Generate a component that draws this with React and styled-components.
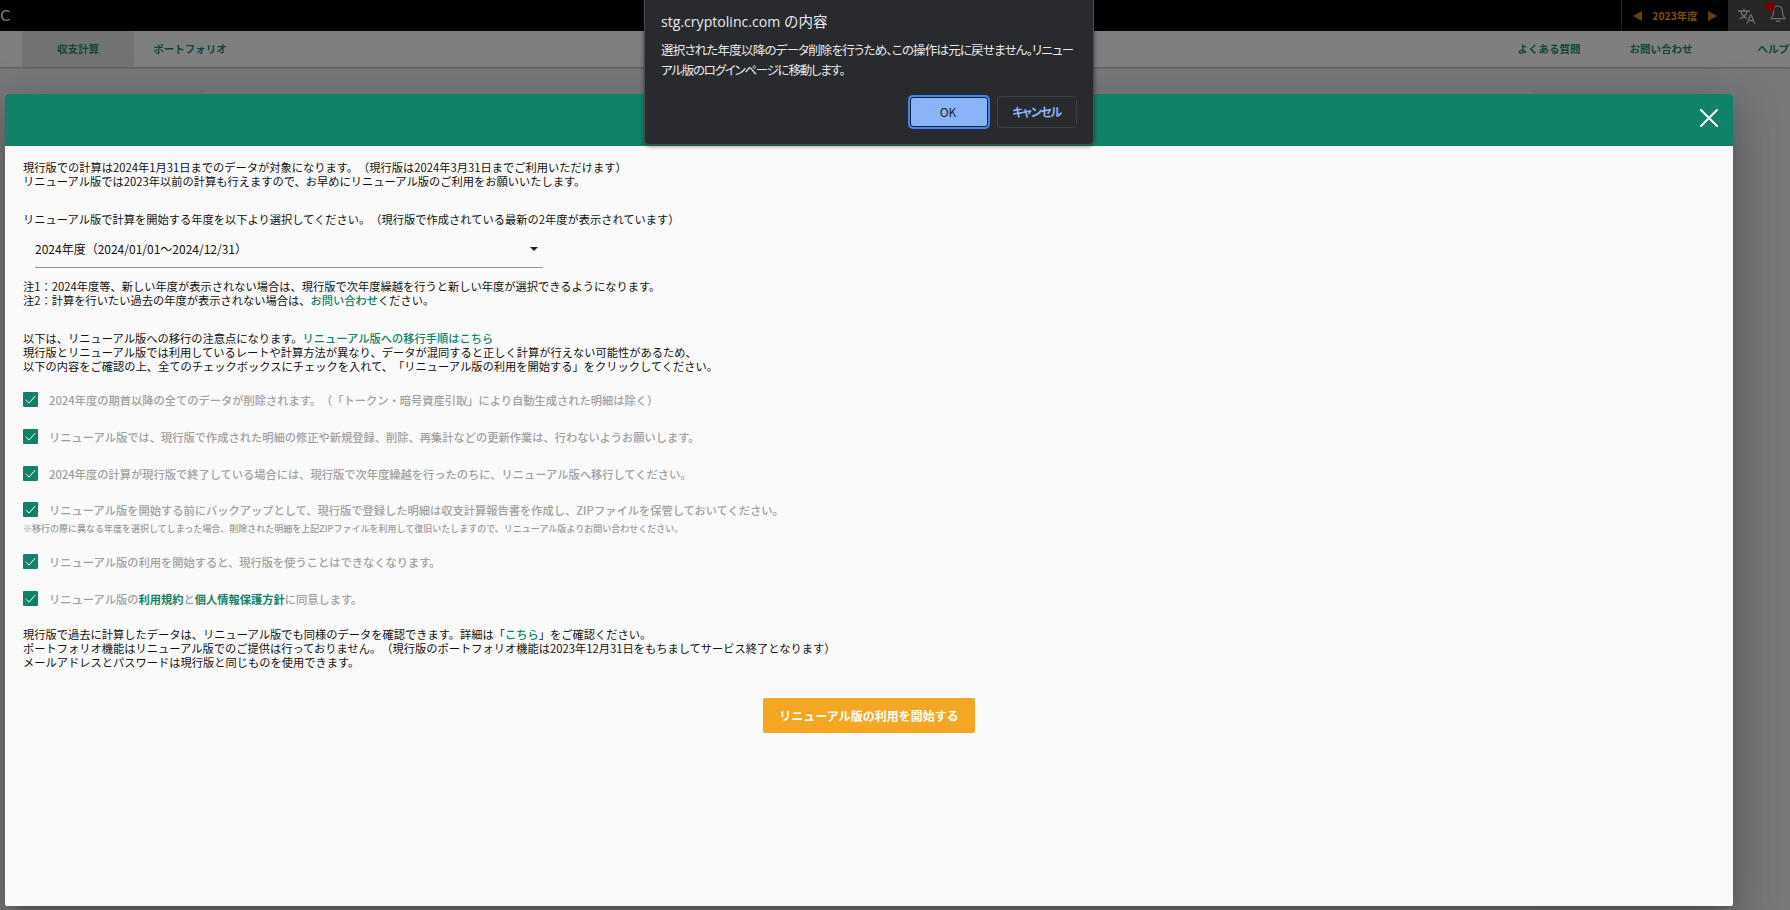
import React, { useState } from 'react';
import styled, { createGlobalStyle } from 'styled-components';

const checkItems = [
  { id: 'delete', text: '2024年度の期首以降の全てのデータが削除されます。（「トークン・暗号資産引取」により自動生成された明細は除く）' },
  { id: 'update', text: 'リニューアル版では、現行版で作成された明細の修正や新規登録、削除、再集計などの更新作業は、行わないようお願いします。' },
  { id: 'carry', text: '2024年度の計算が現行版で終了している場合には、現行版で次年度繰越を行ったのちに、リニューアル版へ移行してください。' },
  {
    id: 'backup',
    text: 'リニューアル版を開始する前にバックアップとして、現行版で登録した明細は収支計算報告書を作成し、ZIPファイルを保管しておいてください。',
    note: '※移行の際に異なる年度を選択してしまった場合、削除された明細を上記ZIPファイルを利用して復旧いたしますので、リニューアル版よりお問い合わせください。',
  },
  { id: 'start', text: 'リニューアル版の利用を開始すると、現行版を使うことはできなくなります。' },
  { id: 'terms' },
];

const TermsText = () => (
  <>
    リニューアル版の<Strong>利用規約</Strong>と<Strong>個人情報保護方針</Strong>に同意します。
  </>
);

const TranslateIcon = () => (
  <svg width="18" height="18" viewBox="0 0 18 18" fill="none" stroke="currentColor" strokeWidth="1.3">
    <path d="M0 4h12M6 1.500V4M2.500 4c1 3.500 3.500 6 6.500 7.500M9.500 4c-1 3.500-4 6.500-8 8" />
    <path d="M9 16.500l3.400-8.500h.8l3.400 8.500M10.300 13.500h5" />
  </svg>
);

const BellIcon = () => (
  <svg width="16" height="18" viewBox="0 0 16 18" fill="none" stroke="currentColor" strokeWidth="1.2">
    <path d="M8 1c-3 0-4.300 2-4.300 4.500 0 4-.8 6-2.600 8.200h13.800c-1.800-2.200-2.600-4.200-2.600-8.200C12.300 3 11 1 8 1z" />
    <path d="M6 15.200c.5 1.800 3.500 1.800 4 0" />
  </svg>
);

const App = () => {
  const [checked, setChecked] = useState(checkItems.map((item) => item.id));

  const toggle = (id) => {
    setChecked(checked.includes(id) ? checked.filter((v) => v !== id) : [...checked, id]);
  };

  return (
    <Screen>
      <GlobalStyle />
      <TopBar>
        <Logo>nC</Logo>
        <YearSwitch>
          <Arrow />
          <span>2023年度</span>
          <Arrow $next />
        </YearSwitch>
        <Tools>
          <TranslateIcon />
          <Bell>
            <BellIcon />
            <Badge />
          </Bell>
        </Tools>
      </TopBar>
      <Nav>
        <Tab $active>収支計算</Tab>
        <Tab>ポートフォリオ</Tab>
        <NavLinks>
          <span>よくある質問</span>
          <span>お問い合わせ</span>
          <span>ヘルプ</span>
        </NavLinks>
      </Nav>
      <Panel />

      <Backdrop>
        <Modal>
          <ModalHeader>
            <CloseButton aria-label="close">
              <svg width="18" height="18" viewBox="0 0 18 18" stroke="#fff" strokeWidth="2" strokeLinecap="round">
                <path d="M1 1l16 16M17 1L1 17" />
              </svg>
            </CloseButton>
          </ModalHeader>
          <ModalBody>
            <Text>
              現行版での計算は2024年1月31日までのデータが対象になります。（現行版は2024年3月31日までご利用いただけます）
              <br />
              リニューアル版では2023年以前の計算も行えますので、お早めにリニューアル版のご利用をお願いいたします。
            </Text>
            <Text $top={24}>
              リニューアル版で計算を開始する年度を以下より選択してください。（現行版で作成されている最新の2年度が表示されています）
            </Text>
            <Select>
              <span>2024年度（2024/01/01～2024/12/31）</span>
              <Caret />
            </Select>
            <Text $top={11}>
              注1：2024年度等、新しい年度が表示されない場合は、現行版で次年度繰越を行うと新しい年度が選択できるようになります。
              <br />
              注2：計算を行いたい過去の年度が表示されない場合は、<Link>お問い合わせ</Link>ください。
            </Text>
            <Text $top={24}>
              以下は、リニューアル版への移行の注意点になります。<Link>リニューアル版への移行手順はこちら</Link>
              <br />
              現行版とリニューアル版では利用しているレートや計算方法が異なり、データが混同すると正しく計算が行えない可能性があるため、
              <br />
              以下の内容をご確認の上、全てのチェックボックスにチェックを入れて、「リニューアル版の利用を開始する」をクリックしてください。
            </Text>
            <CheckList>
              {checkItems.map((item) => (
                <CheckItem key={item.id} $note={!!item.note}>
                  <CheckRow onClick={() => toggle(item.id)}>
                    <CheckBox $on={checked.includes(item.id)}>
                      <svg width="15" height="15" viewBox="0 0 15 15" fill="none" stroke="#fff" strokeWidth="1">
                        <path d="M2.700 7.800l3.300 3.300 6.200-7" />
                      </svg>
                    </CheckBox>
                    <span>{item.text || <TermsText />}</span>
                  </CheckRow>
                  {item.note && <Note>{item.note}</Note>}
                </CheckItem>
              ))}
            </CheckList>
            <Text>
              現行版で過去に計算したデータは、リニューアル版でも同様のデータを確認できます。詳細は「<Link>こちら</Link>」をご確認ください。
              <br />
              ポートフォリオ機能はリニューアル版でのご提供は行っておりません。（現行版のポートフォリオ機能は2023年12月31日をもちましてサービス終了となります）
              <br />
              メールアドレスとパスワードは現行版と同じものを使用できます。
            </Text>
            <StartButton>リニューアル版の利用を開始する</StartButton>
          </ModalBody>
        </Modal>
      </Backdrop>

      <Confirm>
        <ConfirmTitle>
          stg.cryptolinc.com <span>の内容</span>
        </ConfirmTitle>
        <ConfirmText>
          <ConfirmLine $spacing="-0.8px">
            選択された年度以降のデータ削除を行うため、この操作は元に戻せません。リニュー
          </ConfirmLine>
          <ConfirmLine $spacing="-1.25px">アル版のログインページに移動します。</ConfirmLine>
        </ConfirmText>
        <ConfirmActions>
          <OkButton>OK</OkButton>
          <CancelButton>キャンセル</CancelButton>
        </ConfirmActions>
      </Confirm>
    </Screen>
  );
};

export default App;

const GlobalStyle = createGlobalStyle`
  * {
    box-sizing: border-box;
  }
  body {
    margin: 0;
    font-family: 'Noto Sans CJK JP', sans-serif;
    text-spacing-trim: space-all;
  }
  button {
    font-family: inherit;
    padding: 0;
    cursor: pointer;
  }
`;

const Screen = styled.div`
  position: relative;
  display: flex;
  flex-direction: column;
  width: 1790px;
  height: 910px;
  overflow: hidden;
  background: #eff1f5;
`;

const TopBar = styled.header`
  display: flex;
  flex: none;
  height: 31px;
  background: #000;
  color: #fff;
`;

const Logo = styled.div`
  margin: 0 auto 0 -8px;
  font-family: Lato, sans-serif;
  font-size: 15px;
  font-weight: 400;
  line-height: 30px;
`;

const YearSwitch = styled.div`
  display: flex;
  align-items: center;
  justify-content: space-between;
  width: 107px;
  padding: 0 11px;
  border-left: 1px solid #444;
  color: #f59a23;
  font-size: 10.4px;
  font-weight: 700;
  line-height: 28px;
`;

const Arrow = styled.i`
  border: 5px solid transparent;
  border-width: 5px 0;
  border-right: 9px solid #c98420;
  transform: ${({ $next }) => ($next ? 'scaleX(-1)' : 'none')};
`;

const Tools = styled.div`
  display: flex;
  gap: 14px;
  width: 62px;
  padding: 7px 0 0 10px;
  background: #4d4d4d;
  color: #ddd;

  svg {
    flex: none;
    display: block;
  }
`;

const Bell = styled.div`
  position: relative;
  margin-top: -2px;
`;

const Badge = styled.i`
  position: absolute;
  top: -3px;
  left: -5px;
  width: 10px;
  height: 10px;
  border-radius: 50%;
  background: #f00000;
`;

const Nav = styled.nav`
  display: flex;
  flex: none;
  height: 36px;
  padding-left: 22px;
  background: #fff;
  box-shadow: 0 1px 2px rgba(0, 0, 0, 0.3);
  color: #1a8f76;
  font-size: 10.5px;
  font-weight: 700;
  line-height: 36px;
`;

const Tab = styled.div`
  width: 112px;
  background: ${({ $active }) => ($active ? '#e6e6e6' : 'none')};
  text-align: center;
`;

const NavLinks = styled.div`
  display: flex;
  gap: 49px;
  margin-left: auto;
  margin-right: 1px;

  span:last-child {
    margin-left: 16px;
  }
`;

const Panel = styled.div`
  flex: 1;
  margin: 24px 257px 0 205px;
  background: #f7f7f7;
`;

const Backdrop = styled.div`
  position: absolute;
  inset: 0;
  padding: 94px 57px 4px 5px;
  background: rgba(0, 0, 0, 0.5);
`;

const Modal = styled.section`
  display: flex;
  flex-direction: column;
  height: 812px;
  overflow: hidden;
  border-radius: 2px;
  background: #fafafa;
  box-shadow: 0 11px 15px -7px rgba(0, 0, 0, 0.2), 0 24px 38px 3px rgba(0, 0, 0, 0.14),
    0 9px 46px 8px rgba(0, 0, 0, 0.12);
`;

const ModalHeader = styled.div`
  display: flex;
  justify-content: flex-end;
  height: 52px;
  padding: 15px 15px 0 0;
  background: #11826a;
`;

const CloseButton = styled.button`
  height: 18px;
  border: none;
  background: none;
`;

const ModalBody = styled.div`
  display: flex;
  flex-direction: column;
  padding: 14px 18px;
  color: #111;
  font-size: 11.26px;
  line-height: 14px;
`;

const Text = styled.p`
  margin: ${({ $top }) => $top || 0}px 0 0;
  white-space: nowrap;
`;

const Link = styled.a`
  color: #11826a;
  font-weight: 500;
`;

const Strong = styled(Link)`
  font-weight: 700;
`;

const Select = styled.div`
  display: flex;
  align-items: center;
  justify-content: space-between;
  width: 508px;
  height: 36px;
  margin: 6px 0 0 12px;
  padding: 0 4px 1px 0;
  border-bottom: 1px solid #949494;
  font-size: 12px;
`;

const Caret = styled.i`
  margin-right: 1px;
  border: 4px solid transparent;
  border-top-color: #222;
  border-bottom: 0;
`;

const CheckList = styled.div`
  margin-top: 19px;
`;

const CheckItem = styled.div`
  height: ${({ $note }) => ($note ? 52 : 37)}px;

  &:nth-child(3n) {
    height: 36px;
  }
`;

const CheckRow = styled.label`
  display: flex;
  gap: 11px;
  line-height: 17px;
  color: #a0a0a0;
  font-weight: 500;
  white-space: nowrap;
`;

const CheckBox = styled.i`
  width: 15px;
  height: 15px;
  border-radius: 1px;
  background: ${({ $on }) => ($on ? '#11826a' : '#fff')};

  svg {
    display: block;
  }
`;

const Note = styled.div`
  margin-top: 3px;
  color: #999;
  font-size: 9px;
  font-weight: 500;
  line-height: 14px;
`;

const StartButton = styled.button`
  align-self: center;
  width: 212px;
  height: 35px;
  margin-top: 29px;
  border: none;
  border-radius: 2px;
  background: #f5a623;
  color: #fff;
  font-size: 12px;
  font-weight: 700;
`;

const Confirm = styled.div`
  position: absolute;
  top: -1px;
  left: 644px;
  width: 450px;
  height: 146px;
  padding: 12px 16px 0;
  border: 1px solid #4a4c50;
  border-radius: 0 0 5px 5px;
  background: #292a2d;
  box-shadow: 0 1px 4px rgba(0, 0, 0, 0.5);
  color: #e8eaed;
`;

const ConfirmTitle = styled.div`
  height: 20px;
  font-family: 'Open Sans', 'Noto Sans CJK JP', sans-serif;
  font-size: 14.1px;
  line-height: 20px;
  white-space: nowrap;

  span {
    font-size: 14.5px;
  }
`;

const ConfirmText = styled.div`
  margin-top: 8px;
  font-size: 12.5px;
  line-height: 20px;
  font-feature-settings: 'palt';
  white-space: nowrap;
`;

const ConfirmLine = styled.div`
  letter-spacing: ${({ $spacing }) => $spacing};
`;

const ConfirmActions = styled.div`
  display: flex;
  justify-content: flex-end;
  gap: 9px;
  margin-top: 16px;
`;

const OkButton = styled.button`
  width: 78px;
  height: 30px;
  margin-top: 1px;
  padding: 0 2px 1px 0;
  border: 1px solid #202124;
  border-radius: 3px;
  background: #8ab4f8;
  box-shadow: 0 0 0 2px #4285f4;
  color: #202124;
  font-size: 12px;
`;

const CancelButton = styled.button`
  width: 80px;
  height: 32px;
  padding: 0 1px 1px 0;
  border: 1px solid #3f4145;
  border-radius: 4px;
  background: none;
  color: #8ab4f8;
  font-size: 12px;
  font-weight: 700;
  font-feature-settings: 'palt';
  letter-spacing: -1.4px;
`;
